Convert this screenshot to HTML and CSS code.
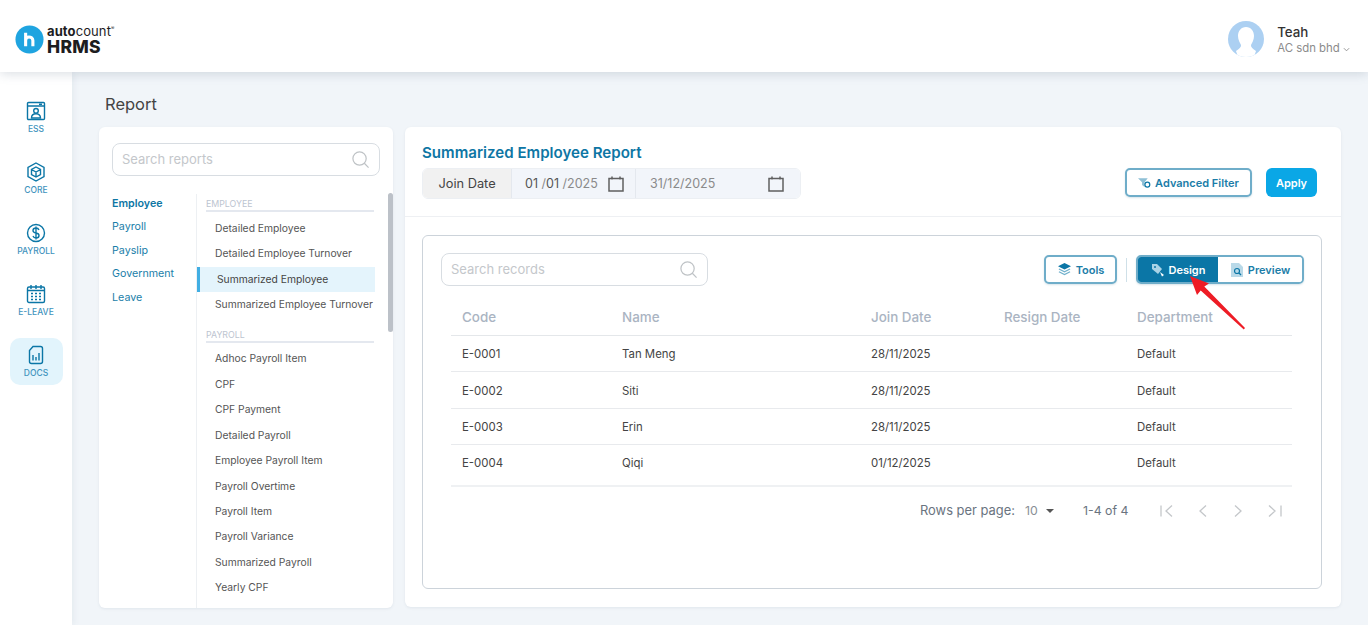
FILE: index.html
```html
<!DOCTYPE html>
<html lang="en">
<head>
<meta charset="utf-8">
<title>Report</title>
<link rel="stylesheet" href="styles.css">
</head>
<body>
<header class="topbar">
  <div class="logo">
    <svg class="logo-mark" viewBox="0 0 30 30"><circle cx="15" cy="15" r="14.5" fill="#1fa4e0"/><path d="M11 8v14M11 16c0-2.500 1.700-3.600 3.500-3.600S18.500 13.500 18.500 16v6" fill="none" stroke="#fff" stroke-width="3.200"/></svg>
    <div class="logo-text"><div class="logo-top"><b>auto</b>count<sup>®</sup></div><div class="logo-bottom">HRMS</div></div>
  </div>
  <div class="user">
    <svg class="avatar" viewBox="0 0 36 36"><defs><clipPath id="av"><circle cx="18" cy="18" r="18"/></clipPath></defs><g clip-path="url(#av)"><rect width="36" height="36" fill="#acd0f2"/><path d="M18 6c-5 0-8 4-8 9 0 4 2 7 3 9 .5 2-2 4-5 6l2 6h16l2-6c-3-2-5.500-4-5-6 1-2 3-5 3-9 0-5-3-9-8-9z" fill="#fff"/></g></svg>
    <div class="user-text">
      <div class="user-name">Teah</div>
      <div class="user-org">AC sdn bhd <svg class="chev" viewBox="0 0 8 5"><path d="M1 1l3 3 3-3" fill="none" stroke="#8a8a8a" stroke-width="1"/></svg></div>
    </div>
  </div>
</header>
<div class="body-row">
  <nav class="sidebar">
    <a class="nav-item">
      <svg viewBox="0 0 20 20" class="nav-icon"><rect x="1.500" y="1.500" width="17" height="17" rx="1" /><path d="M1.500 5h17M13 3.300h3"/><circle cx="10" cy="9.800" r="2.300"/><path d="M5.500 17c0-3 2-4.200 4.500-4.200s4.500 1.200 4.500 4.200z"/></svg>
      <span>ESS</span>
    </a>
    <a class="nav-item">
      <svg viewBox="0 0 20 20" class="nav-icon"><path d="M10 1l8 4.500v9L10 19l-8-4.500v-9z"/><path d="M10 5l4.500 2.500v5L10 15l-4.500-2.500v-5zM5.500 7.500L10 10l4.500-2.500M10 10v5"/></svg>
      <span>CORE</span>
    </a>
    <a class="nav-item">
      <svg viewBox="0 0 20 20" class="nav-icon"><circle cx="10" cy="10" r="8.500"/><path d="M13 7c-.5-1.300-1.700-2-3-2-1.700 0-3 1-3 2.500S8.300 9.700 10 10s3 1 3 2.500-1.300 2.500-3 2.500c-1.300 0-2.500-.7-3-2M10 3.500v13"/></svg>
      <span>PAYROLL</span>
    </a>
    <a class="nav-item">
      <svg viewBox="0 0 20 20" class="nav-icon"><rect x="1.500" y="3" width="17" height="15.500" rx="1.500"/><path d="M5 1v4M10 1v4M15 1v4M1.500 6.500h17"/><path class="dots" d="M5 9.500h2M9 9.500h2M13 9.500h2M5 12.500h2M9 12.500h2M13 12.500h2M5 15.500h2M9 15.500h2M13 15.500h2"/></svg>
      <span>E-LEAVE</span>
    </a>
    <a class="nav-item active">
      <svg viewBox="0 0 20 20" class="nav-icon"><path d="M7 1.500h7.500a2 2 0 0 1 2 2v13a2 2 0 0 1-2 2h-9a2 2 0 0 1-2-2V5.500z"/><path d="M7 10v5.500M10 12v3.500M13 8v7.500"/></svg>
      <span>DOCS</span>
    </a>
  </nav>
  <main class="content">
    <h1 class="page-title">Report</h1>
    <div class="cards">
      <section class="card reports">
        <div class="search search-reports">
          <span>Search reports</span>
          <svg viewBox="0 0 20 20"><circle cx="9" cy="9" r="7"/><path d="M14 14l4.500 4.500"/></svg>
        </div>
        <div class="reports-body">
          <ul class="cats">
            <li class="cat-on">Employee</li>
            <li>Payroll</li>
            <li>Payslip</li>
            <li>Government</li>
            <li>Leave</li>
          </ul>
          <div class="report-list">
            <div class="group">EMPLOYEE</div>
            <div class="item">Detailed Employee</div>
            <div class="item">Detailed Employee Turnover</div>
            <div class="item selected">Summarized Employee</div>
            <div class="item">Summarized Employee Turnover</div>
            <div class="group group-next">PAYROLL</div>
            <div class="item">Adhoc Payroll Item</div>
            <div class="item">CPF</div>
            <div class="item">CPF Payment</div>
            <div class="item">Detailed Payroll</div>
            <div class="item">Employee Payroll Item</div>
            <div class="item">Payroll Overtime</div>
            <div class="item">Payroll Item</div>
            <div class="item">Payroll Variance</div>
            <div class="item">Summarized Payroll</div>
            <div class="item">Yearly CPF</div>
            <div class="scrollbar"></div>
          </div>
        </div>
      </section>
      <section class="card report">
        <div class="report-head">
          <div>
            <h2 class="report-title">Summarized Employee Report</h2>
            <div class="date-filter">
              <div class="df-label">Join Date</div>
              <div class="df-field df-from"><span><b>01</b> /<b>01</b> /2025</span><svg class="cal" viewBox="0 0 16 16"><path d="M1 2.500h14v12.500H1zM4 .5v3M12 .5v3"/></svg></div>
              <div class="df-field df-to"><span>31/12/2025</span><svg class="cal" viewBox="0 0 16 16"><path d="M1 2.500h14v12.500H1zM4 .5v3M12 .5v3"/></svg></div>
            </div>
          </div>
          <div class="head-actions">
            <button class="btn btn-adv"><svg viewBox="0 0 16 14"><path d="M0 1h12L8 6v6L5 9.500V6z" fill="#8fc0d6"/><circle cx="11.500" cy="9" r="3" fill="#fff" stroke="#0b76a6" stroke-width="1.500"/></svg>Advanced Filter</button>
            <button class="btn-apply">Apply</button>
          </div>
        </div>
        <div class="panel-wrap">
          <div class="panel">
            <div class="toolbar">
              <div class="search search-records">
                <span>Search records</span>
                <svg viewBox="0 0 20 20"><circle cx="9" cy="9" r="7"/><path d="M14 14l4.500 4.500"/></svg>
              </div>
              <div class="tool-actions">
                <button class="btn btn-tools"><svg viewBox="0 0 16 14"><path d="M8 0l7 3.500L8 7 1 3.500z" fill="#0b76a6"/><path d="M2 6.500L8 9.500l6-3M2 9.500l6 3 6-3" fill="none" stroke="#6fb0cc" stroke-width="1.300"/></svg>Tools</button>
                <span class="divider"></span>
                <div class="toggle">
                  <button class="tg tg-on"><svg viewBox="0 0 14 14"><path d="M1 1h5l5 5-4 5-6-5z" fill="#a9d3e6"/><circle cx="4" cy="4" r="1" fill="#0b76a6"/><path d="M9 9l4 3-2 1.500z" fill="#fff"/></svg>Design</button>
                  <button class="tg"><svg viewBox="0 0 12 14"><path d="M0 0h8l4 4v10H0z" fill="#b9d9e8"/><circle cx="6" cy="8" r="2.500" fill="none" stroke="#0b76a6" stroke-width="1.200"/><path d="M8 10l2 2" stroke="#0b76a6" stroke-width="1.200"/></svg>Preview</button>
                </div>
              </div>
            </div>
            <table class="grid">
              <thead><tr><th class="c1">Code</th><th class="c2">Name</th><th class="c3">Join Date</th><th class="c4">Resign Date</th><th>Department</th></tr></thead>
              <tbody>
                <tr><td>E-0001</td><td>Tan Meng</td><td>28/11/2025</td><td></td><td>Default</td></tr>
                <tr><td>E-0002</td><td>Siti</td><td>28/11/2025</td><td></td><td>Default</td></tr>
                <tr><td>E-0003</td><td>Erin</td><td>28/11/2025</td><td></td><td>Default</td></tr>
                <tr><td>E-0004</td><td>Qiqi</td><td>01/12/2025</td><td></td><td>Default</td></tr>
              </tbody>
            </table>
            <div class="pager">
              <span class="rpp">Rows per page:</span>
              <span class="rpp-val">10</span>
              <span class="caret"></span>
              <span class="range">1-4 of 4</span>
              <svg class="pg-icons" viewBox="0 0 124 14"><path d="M1 1.500v11M12 1.500l-6 5.500 6 5.500M46 1.500l-6 5.500 6 5.500M75 1.500l6 5.500-6 5.500M109 1.500l6 5.500-6 5.500M121 1.500v11"/></svg>
            </div>
          </div>
        </div>
      </section>
    </div>
  </main>
</div>
<svg class="arrow" viewBox="0 0 70 60"><path d="M0 0L19 7.500 14.300 10.500 55 52 53.800 53.500 10.700 14.500 7 19z" fill="#ee1c25"/></svg>
</body>
</html>
```
FILE: styles.css
```css
* { box-sizing: border-box; }
html, body { margin: 0; height: 625px; overflow: hidden; }
body { font-family: "Inter", "Liberation Sans", sans-serif; color: #444; background: #f1f5f9; position: relative; }
.topbar { height: 72px; background: #fff; display: flex; justify-content: space-between; align-items: center; padding: 0 18px 0 15px; box-shadow: 0 2px 10px rgba(90,110,130,.22); position: relative; z-index: 2; }
.logo { display: flex; align-items: center; gap: 3px; margin-top: 6px; }
.logo-mark { width: 29px; height: 29px; }
.logo-text { color: #1d1d1f; }
.logo-top { font-size: 13px; letter-spacing: .1px; font-weight: 400; height: 15px; line-height: 15px; white-space: nowrap; }
.logo-top b { font-weight: 700; }
.logo-top sup { font-size: 5px; line-height: 8px; vertical-align: top; }
.logo-bottom { font-size: 17.500px; font-weight: 800; letter-spacing: .3px; height: 16px; line-height: 16px; }
.user { display: flex; align-items: center; gap: 13px; margin-top: 6px; }
.avatar { width: 36px; height: 36px; }
.user-name { font-size: 13.300px; font-weight: 500; color: #333; margin-bottom: 1px; }
.user-org { font-size: 11.400px; color: #8b8b8b; }
.chev { width: 7px; height: 5px; }
.body-row { display: flex; height: 553px; }
.sidebar { width: 72px; background: #fff; box-shadow: 2px 0 6px rgba(90,110,130,.08); padding-top: 21.500px; display: flex; flex-direction: column; align-items: center; flex: none; }
.nav-item { width: 53px; height: 47px; margin-bottom: 14.250px; display: flex; flex-direction: column; align-items: center; justify-content: center; gap: 3px; color: #3f93bd; font-size: 8.500px; font-weight: 500; border-radius: 10px; }
.nav-item.active { background: #e2f4fc; color: #3f93bd; margin-top: -1px; }
.nav-icon { width: 20px; height: 20px; fill: none; stroke: #0b76a6; stroke-width: 1.400; }
.nav-icon .dots { stroke-width: 1.600; }
.content { flex: 1; padding: 23px 27px 0 27px; min-width: 0; }
.page-title { margin: 0 0 14px 6px; font-size: 16.500px; font-weight: 400; line-height: 18px; color: #444; }
.cards { display: flex; gap: 12px; }
.card { background: #fff; border-radius: 6px; height: 481px; box-shadow: 0 1px 3px rgba(90,110,130,.1); overflow: hidden; }
.reports { width: 294px; flex: none; padding: 16px 13px 0 13px; }
.search { border: 1px solid #d8dde2; border-radius: 8px; display: flex; justify-content: space-between; align-items: center; color: #c4c7cb; font-size: 13px; }
.search span { padding-bottom: 2px; }
.search svg { fill: none; stroke: #bfc3c6; stroke-width: 1.300; width: 19px; height: 19px; }
.search-reports { height: 33px; width: 268px; padding: 0 9px 0 9px; }
.reports-body { display: flex; margin-top: 18px; height: 440px; }
.cats { list-style: none; margin: 0; padding: 1px 0 0; width: 84px; flex: none; font-size: 10.700px; color: #1a7ea9; }
.cats li { height: 23.400px; line-height: 18px; }
.cats .cat-on { font-weight: 600; color: #0e76a4; }
.report-list { border-left: 1px solid #edf0f3; flex: none; width: 197px; position: relative; font-size: 10.300px; color: #555; padding-top: 1px; }
.group { margin: 0 19px 3.800px 9px; color: #bcc4d0; font-size: 8.800px; height: 17px; line-height: 18px; border-bottom: 2px solid #e4e8ef; }
.group-next { margin-top: 8px; }
.item { height: 25.450px; line-height: 25.450px; padding-left: 18px; white-space: nowrap; width: 178px; }
.item.selected { background: #e4f4fc; border-left: 3px solid #41aee3; padding-left: 17px; color: #444; }
.scrollbar { position: absolute; right: 0; top: -1px; width: 5px; height: 139px; border-radius: 3px; background: #bcc1c8; }
.report { flex: 1; min-width: 0; height: 480px; }
.report-head { height: 90px; border-bottom: 1px solid #eef0f3; padding: 17px 24px 0 17px; display: flex; justify-content: space-between; }
.report-title { margin: 0 0 6px; font-size: 15.100px; line-height: 18px; font-weight: 600; color: #0e76a4; }
.date-filter { display: flex; height: 31px; border: 1px solid #eceff3; border-radius: 6px; overflow: hidden; font-size: 12.500px; width: 379px; }
.df-label { width: 89px; background: #f1f1f1; display: flex; align-items: center; justify-content: center; color: #444; border-right: 1px solid #e4e8ee; font-size: 12.800px; }
.df-field { background: #f2f5fa; display: flex; align-items: center; justify-content: space-between; color: #8a8a8a; }
.df-field b { font-weight: 400; color: #555; }
.df-from { width: 124px; padding: 0 11px 0 13px; border-right: 1px solid #e4e8ee; }
.df-to { flex: 1; padding: 0 16px 0 14px; }
.cal { width: 16px; height: 16px; fill: none; stroke: #5f5f5f; stroke-width: 1.500; }
.head-actions { display: flex; gap: 14px; padding-top: 24px; align-items: flex-start; }
.btn { display: flex; align-items: center; justify-content: center; gap: 4px; background: #fff; border: 2px solid #6fadc9; border-radius: 5px; color: #1b7da8; font: 600 11px "Inter", "Liberation Sans", sans-serif; padding: 0; box-shadow: 0 1px 2px rgba(60,120,150,.2); }
.btn svg { flex: none; }
.btn-adv { width: 127px; height: 29px; }
.btn-adv svg { width: 13px; height: 12px; }
.btn-apply { width: 51px; height: 29px; background: #0aa7e6; border: 0; border-radius: 6px; color: #fff; font: 600 11px "Inter", "Liberation Sans", sans-serif; }
.panel-wrap { padding: 18px 19px 0 17px; }
.panel { height: 354px; border: 1px solid #ccd3da; border-radius: 6px; padding: 17px 17px 0 18px; }
.toolbar { display: flex; justify-content: space-between; align-items: center; }
.search-records { width: 267px; height: 33px; padding: 0 9px; }
.tool-actions { display: flex; align-items: center; margin-right: 0; }
.btn-tools { width: 73px; height: 29px; }
.btn-tools svg { width: 15px; height: 13px; }
.divider { width: 1px; height: 24px; background: #cfe0e8; margin: 0 9px; }
.toggle { display: flex; width: 168px; height: 29px; border: 2px solid #6fadc9; border-radius: 5px; overflow: hidden; box-shadow: 0 1px 2px rgba(60,120,150,.2); }
.tg { flex: 1; display: flex; align-items: center; justify-content: center; gap: 4px; background: #fff; border: 0; padding: 0; color: #1b7da8; font: 600 11px "Inter", "Liberation Sans", sans-serif; }
.tg svg { width: 14px; height: 14px; }
.tg-on { background: #0b76a6; color: #fff; flex: none; width: 80px; }
.grid { width: 841px; margin: 14px 0 0 10px; border-collapse: collapse; font-size: 11.400px; table-layout: fixed; }
.grid th { text-align: left; font-weight: 500; color: #aab4c2; font-size: 13.400px; height: 35px; padding: 0; border-bottom: 1px solid #e4e7ea; }
.grid th.c1 { width: 171px; padding-left: 11px; }
.grid th.c2 { width: 249px; }
.grid th.c3 { width: 133px; }
.grid th.c4 { width: 133px; }
.grid td { height: 36.500px; padding: 2px 0 0; color: #444; border-bottom: 1px solid #e8eaed; }
.grid td:first-child { padding-left: 11px; }
.grid tr:last-child td { height: 41px; border-bottom: 2px solid #eff1f3; padding-bottom: 5px; }
.pager { display: flex; align-items: center; margin-top: 14px; margin-left: 479px; font-size: 12.300px; color: #6a7480; height: 20px; white-space: nowrap; }
.rpp { width: 105px; font-size: 12.900px; }
.rpp-val { width: 21px; color: #8a8f96; }
.caret { width: 0; height: 0; border: 4.500px solid transparent; border-top: 4.500px solid #555; border-bottom: 0; }
.range { margin-left: 29px; width: 77px; }
.pg-icons { width: 124px; height: 14px; fill: none; stroke: #c4c7ca; stroke-width: 1.300; }
.arrow { position: absolute; left: 1190px; top: 276px; width: 70px; height: 60px; z-index: 5; }
```
